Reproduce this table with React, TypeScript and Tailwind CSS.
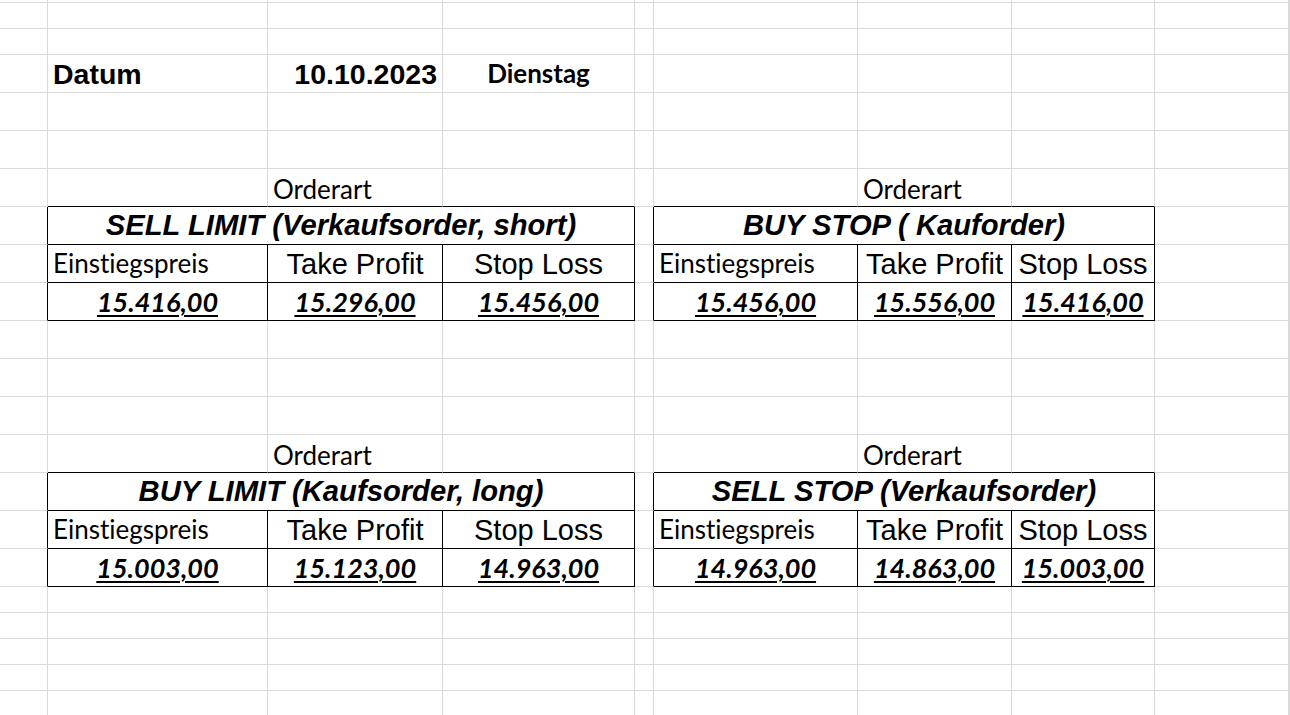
type Kind = 'datum' | 'day' | 'orderart' | 'title' | 'label' | 'head' | 'value';

type Cell = {
  text: string;
  kind: Kind;
  align: 'left' | 'center' | 'right';
  span?: number;
};

const kindClass: Record<Kind, string> = {
  datum: "font-['Liberation_Sans',Arial,sans-serif] font-bold text-[28.5px] pb-[4px]",
  day: "font-['Lato',sans-serif] font-bold text-[26px] pb-[6px]",
  orderart: "font-['Lato',sans-serif] text-[26px] pb-[4px]",
  title: "font-['Liberation_Sans',Arial,sans-serif] font-bold italic text-[29.2px] pb-[4px]",
  label: "font-['Lato',sans-serif] text-[26px] pb-[6px] [font-variant-ligatures:none]",
  head: "font-['Liberation_Sans',Arial,sans-serif] text-[29px] pb-[3px]",
  value: "font-['Lato',sans-serif] font-bold italic text-[27px] pb-[5px] underline decoration-2 underline-offset-[3px]",
};

const alignClass = {
  left: 'justify-start pl-[5px]',
  center: 'justify-center',
  right: 'justify-end pr-[5px]',
};

const tables = [
  { row: 6, col: 1, title: 'SELL LIMIT (Verkaufsorder, short)', values: ['15.416,00', '15.296,00', '15.456,00'] },
  { row: 6, col: 5, title: 'BUY STOP ( Kauforder)', values: ['15.456,00', '15.556,00', '15.416,00'] },
  { row: 13, col: 1, title: 'BUY LIMIT (Kaufsorder, long)', values: ['15.003,00', '15.123,00', '14.963,00'] },
  { row: 13, col: 5, title: 'SELL STOP (Verkaufsorder)', values: ['14.963,00', '14.863,00', '15.003,00'] },
];

const ROWS = 22;
const COLS = 10;

const cells = new Map<string, Cell>();
const skip = new Set<string>();
const blackRight = new Set<string>();
const blackBottom = new Set<string>();

cells.set('3-1', { text: 'Datum', kind: 'datum', align: 'left' });
cells.set('3-2', { text: '10.10.2023', kind: 'datum', align: 'right' });
cells.set('3-3', { text: 'Dienstag', kind: 'day', align: 'center' });

for (const t of tables) {
  const { row, col } = t;
  cells.set(`${row}-${col + 1}`, { text: 'Orderart', kind: 'orderart', align: 'left' });
  for (let c = col; c < col + 3; c++) blackBottom.add(`${row}-${c}`);
  for (let r = row + 1; r <= row + 3; r++) blackRight.add(`${r}-${col - 1}`);

  // merged title cell over three columns
  cells.set(`${row + 1}-${col}`, { text: t.title, kind: 'title', align: 'center', span: 3 });
  skip.add(`${row + 1}-${col + 1}`);
  skip.add(`${row + 1}-${col + 2}`);
  blackRight.add(`${row + 1}-${col}`);
  blackBottom.add(`${row + 1}-${col}`);

  cells.set(`${row + 2}-${col}`, { text: 'Einstiegspreis', kind: 'label', align: 'left' });
  cells.set(`${row + 2}-${col + 1}`, { text: 'Take Profit', kind: 'head', align: 'center' });
  cells.set(`${row + 2}-${col + 2}`, { text: 'Stop Loss', kind: 'head', align: 'center' });
  t.values.forEach((v, i) => cells.set(`${row + 3}-${col + i}`, { text: v, kind: 'value', align: 'center' }));

  for (let r = row + 2; r <= row + 3; r++) {
    for (let c = col; c < col + 3; c++) {
      blackRight.add(`${r}-${c}`);
      blackBottom.add(`${r}-${c}`);
    }
  }
}

export default function App() {
  const out: React.ReactNode[] = [];
  for (let r = 0; r < ROWS; r++) {
    for (let c = 0; c < COLS; c++) {
      const key = `${r}-${c}`;
      if (skip.has(key)) continue;
      const cell = cells.get(key);
      const border = [
        'border-r border-b',
        blackRight.has(key) ? 'border-r-black' : 'border-r-[#dadada]',
        blackBottom.has(key) ? 'border-b-black' : 'border-b-[#dadada]',
        cell?.span === 3 ? 'col-span-3' : '',
      ].join(' ');
      out.push(
        <div key={key} className={`flex items-end min-w-0 ${border} ${cell ? alignClass[cell.align] : ''}`}>
          {cell && (
            <span className={`block whitespace-nowrap leading-none text-black ${kindClass[cell.kind]}`}>{cell.text}</span>
          )}
        </div>
      );
    }
  }

  return (
    <div className="h-[715px] w-[1290px] overflow-hidden bg-white">
      <div className="grid grid-cols-[48px_220px_175px_192px_19px_204px_154px_143px_134px_1fr] grid-rows-[3px_26px_26px_repeat(14,38px)_26px_26px_26px_26px_26px]">
        {out}
      </div>
    </div>
  );
}
